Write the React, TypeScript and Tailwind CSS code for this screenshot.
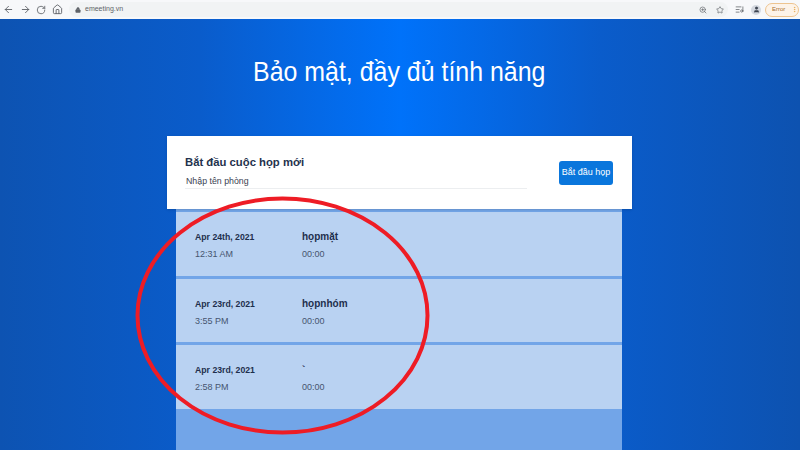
import { ArrowLeft, ArrowRight, RotateCw, Home, Lock, ZoomIn, Star, ListMusic, User, MoreVertical } from 'lucide-react';

const meetings = [
  { date: 'Apr 24th, 2021', time: '12:31 AM', name: 'họpmặt', length: '00:00' },
  { date: 'Apr 23rd, 2021', time: '3:55 PM', name: 'họpnhóm', length: '00:00' },
  { date: 'Apr 23rd, 2021', time: '2:58 PM', name: '`', length: '00:00' },
];

function Toolbar() {
  return (
    <div className="h-[19px] bg-[#f7f8fa] flex items-center text-[#5f6368] shrink-0">
      <div className="flex items-center gap-[5.5px] pl-[3px] w-[69px]">
        <ArrowLeft size={11} />
        <ArrowRight size={11} />
        <RotateCw size={10} />
        <Home size={11} />
      </div>
      <div className="w-[659px] h-[15px] rounded-full bg-[#f1f3f4] flex items-center pl-[6px] gap-[4px]">
        <Lock size={6} fill="#5f6368" />
        <span className="text-[7px] text-[#5f6368]">emeeting.vn</span>
        <div className="ml-auto flex items-center gap-[9px] pr-[4px]">
          <ZoomIn size={8} />
          <Star size={8} />
        </div>
      </div>
      <ListMusic size={9} className="ml-[7px]" />
      <div className="ml-[7px] w-[10px] h-[10px] rounded-full bg-[#d5d9e0] flex items-center justify-center">
        <User size={7} fill="#3c4350" className="text-[#3c4350]" />
      </div>
      <div className="ml-[4px] w-[34px] h-[14px] rounded-full border border-[#edc490] bg-[#fdf3e8] flex items-center justify-between pl-[6px] text-[6px] text-[#a56a2c]">
        Error
        <MoreVertical size={7} className="text-[#e2a03f]" />
      </div>
    </div>
  );
}

function MeetingRow({ date, time, name, length }: (typeof meetings)[number]) {
  return (
    <div className="h-[66px] first:h-[67px] last:h-[67px] flex pl-[19px] pt-[19px] border-t-[3px] border-[#72a5e8] bg-[#b9d2f2]">
      <div className="w-[107px]">
        <div className="text-[8.7px] leading-[12px] font-bold text-[#1e2f4d]">{date}</div>
        <div className="mt-[5px] text-[9px] leading-[12px] text-[#46556f]">{time}</div>
      </div>
      <div>
        <div className="text-[10px] leading-[12px] font-bold text-[#1e2f4d]">{name}</div>
        <div className="mt-[5px] text-[9px] leading-[12px] text-[#46556f]">{length}</div>
      </div>
    </div>
  );
}

export default function App() {
  return (
    <div className="relative w-[800px] h-[450px] overflow-hidden flex flex-col font-['Liberation_Sans',sans-serif]">
      <Toolbar />
      <div className="flex-1 flex flex-col items-center pr-[1px] bg-[linear-gradient(90deg,#0d53b2_0%,#0a5ccb_25%,#0072fa_50%,#0a5ccb_75%,#0d52b0_100%)]">
        <h1 className="mt-[33px] h-[40px] scale-x-[0.89] whitespace-nowrap text-[28px] leading-[40px] font-light text-white">Bảo mật, đầy đủ tính năng</h1>
        <div className="mt-[44px] w-[465px] h-[73px] bg-white flex items-center justify-between pl-[18px] pr-[19px] relative z-10 shadow-sm">
          <div className="w-[342px] pb-[2px]">
            <div className="-mt-[1px] text-[11.3px] leading-[16px] font-bold text-[#24324d]">Bắt đầu cuộc họp mới</div>
            <div className="mt-[5px] pl-[1px] text-[8.8px] leading-[13px] text-[#3a4252] border-b border-[#eceef0]">Nhập tên phòng</div>
          </div>
          <button className="w-[54px] h-[24px] rounded-[3px] bg-[#0a76dc] text-white text-[9px]">Bắt đầu họp</button>
        </div>
        <div className="w-[446px] mr-[1px] flex-1 bg-[#72a5e8]">
          {meetings.map((m, i) => (
            <MeetingRow key={i} {...m} />
          ))}
        </div>
      </div>
      <svg className="absolute left-0 top-0 pointer-events-none z-20" width="800" height="450">
        <ellipse cx="282.5" cy="315.5" rx="145" ry="117" fill="none" stroke="#ee1c25" strokeWidth="4" />
      </svg>
    </div>
  );
}
